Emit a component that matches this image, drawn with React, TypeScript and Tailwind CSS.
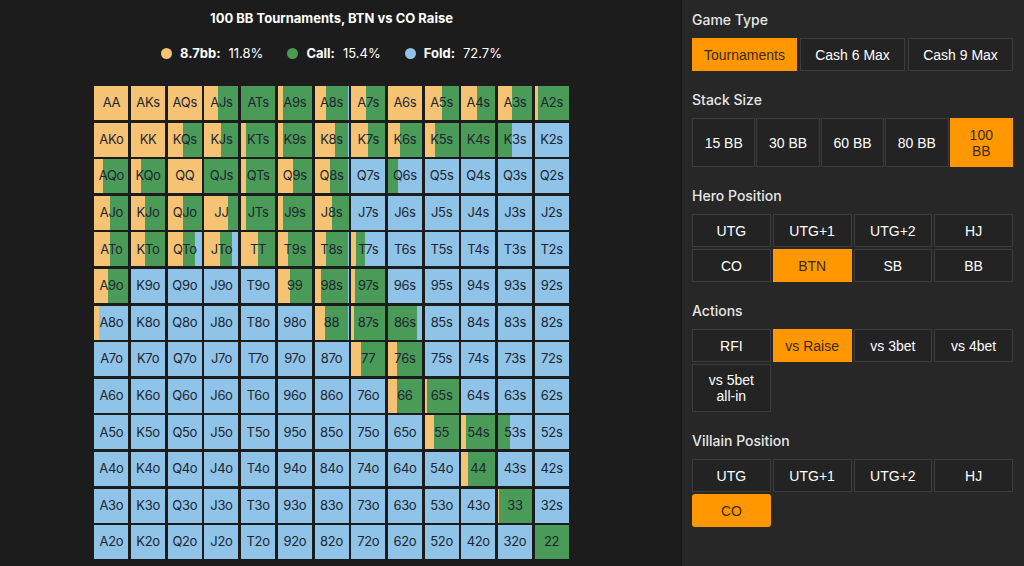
import React from "react";

const R = ["A","K","Q","J","T","9","8","7","6","5","4","3","2"];
// [raise, call] percent; fold = rest
const mix: Record<string, [number, number]> = {
  AA:[100,0],AKs:[100,0],AQs:[100,0],AJs:[40,60],ATs:[0,100],A9s:[15,85],A8s:[35,65],A7s:[45,55],A6s:[100,0],A5s:[50,50],A4s:[45,55],A3s:[40,60],A2s:[10,90],
  AKo:[100,0],KK:[100,0],KQs:[45,55],KJs:[50,50],KTs:[15,85],K9s:[15,85],K8s:[60,40],K7s:[50,50],K6s:[35,65],K5s:[30,70],K4s:[0,100],K3s:[0,40],
  AQo:[25,75],KQo:[30,70],QQ:[100,0],QJs:[0,100],QTs:[15,85],Q9s:[45,55],Q8s:[45,55],Q6s:[0,30],
  AJo:[45,55],KJo:[40,60],QJo:[45,55],JJ:[70,30],JTs:[15,85],J9s:[15,85],J8s:[50,50],
  ATo:[45,55],KTo:[40,60],QTo:[45,35],JTo:[45,35],TT:[50,50],T9s:[30,70],T8s:[35,65],T7s:[15,25],
  A9o:[40,60],"99":[35,65],"98s":[20,80],"97s":[10,90],
  A8o:[15,0],"88":[30,70],"87s":[8,92],"86s":[0,85],
  "77":[30,70],"76s":[28,72],
  "66":[28,72],"65s":[8,92],
  "55":[28,72],"54s":[15,85],"53s":[0,35],
  "44":[20,80],"33":[3,97],"22":[0,100],
};

function name(i: number, j: number) {
  if (i === j) return R[i] + R[j];
  if (j > i) return R[i] + R[j] + "s";
  return R[j] + R[i] + "o";
}

function Cell({ n }: { n: string }) {
  const [r, c] = mix[n] ?? [0, 0];
  return (
    <div className="relative h-[34px] w-[34px] overflow-hidden flex bg-[#8fc3e8]">
      <div className="h-full bg-[#f6c374]" style={{ width: r + "%" }} />
      <div className="h-full bg-[#4a9a58]" style={{ width: c + "%" }} />
      <div className="absolute inset-0 flex items-center justify-center text-[13px] text-[#1d2630] tracking-tight">{n}</div>
    </div>
  );
}

function Btn({ children, active, h = "h-[33px]", rounded }: { children: React.ReactNode; active?: boolean; h?: string; rounded?: boolean }) {
  return (
    <div
      className={
        "flex items-center justify-center text-center text-[14px] leading-[16px] border " + h + " " +
        (active ? "bg-[#ff9800] text-[#3a2a10] border-[#ff9800]" : "bg-[#232323] text-white border-[#3c3c3c]") +
        (rounded ? " rounded-[3px] border-[#d8d8d8] border-2" : "")
      }
    >
      {children}
    </div>
  );
}

function Label({ children }: { children: React.ReactNode }) {
  return <div className="text-[14px] font-medium text-[#e6e6e6] mb-[8px]" style={{ fontFamily: "Inter, sans-serif" }}>{children}</div>;
}

export default function App() {
  return (
    <div className="w-[1024px] h-[566px] flex bg-[#1c1c1c] overflow-hidden" style={{ fontFamily: "'Liberation Sans', Arial, sans-serif" }}>
      <div className="w-[685px] flex flex-col items-center pl-[0px]" style={{ fontFamily: "Inter, sans-serif" }}>
        <div className="w-[478px] ml-[-18px] flex flex-col items-center">
          <div className="mt-[9px] text-[13px] font-bold text-white">100 BB Tournaments, BTN vs CO Raise</div>
          <div className="mt-[15px] flex items-center gap-[24px] text-[13px] text-white">
            <span className="flex items-center gap-[8px]"><span className="w-[11px] h-[11px] rounded-full bg-[#f6c374]" /><b>8.7bb:</b> 11.8%</span>
            <span className="flex items-center gap-[8px]"><span className="w-[11px] h-[11px] rounded-full bg-[#4a9a58]" /><b>Call:</b> 15.4%</span>
            <span className="flex items-center gap-[8px]"><span className="w-[11px] h-[11px] rounded-full bg-[#8fc3e8]" /><b>Fold:</b> 72.7%</span>
          </div>
          <div className="mt-[23px] grid grid-cols-[repeat(13,34px)] gap-x-[2.7px] gap-y-[2.6px]">
            {R.map((_, i) => R.map((__, j) => <Cell key={i + "-" + j} n={name(i, j)} />))}
          </div>
        </div>
      </div>
      <div className="flex-1 bg-[#272727] border-l border-[#1a1a1a] pl-[10px] pr-[11px] pt-[9px]">
        <Label>Game Type</Label>
        <div className="grid grid-cols-[105px_105px_105px] gap-[3px] mb-[18px]">
          <Btn active>Tournaments</Btn><Btn>Cash 6 Max</Btn><Btn>Cash 9 Max</Btn>
        </div>
        <Label>Stack Size</Label>
        <div className="grid grid-cols-5 gap-[1px] mb-[18px]">
          <Btn h="h-[49px]">15 BB</Btn><Btn h="h-[49px]">30 BB</Btn><Btn h="h-[49px]">60 BB</Btn><Btn h="h-[49px]">80 BB</Btn><Btn h="h-[49px]" active>100<br />BB</Btn>
        </div>
        <Label>Hero Position</Label>
        <div className="grid grid-cols-4 gap-[2px] mb-[18px]">
          <Btn>UTG</Btn><Btn>UTG+1</Btn><Btn>UTG+2</Btn><Btn>HJ</Btn>
          <Btn>CO</Btn><Btn active>BTN</Btn><Btn>SB</Btn><Btn>BB</Btn>
        </div>
        <Label>Actions</Label>
        <div className="grid grid-cols-4 gap-[2px] mb-[18px]">
          <Btn>RFI</Btn><Btn active>vs Raise</Btn><Btn>vs 3bet</Btn><Btn>vs 4bet</Btn>
          <Btn h="h-[48px]">vs 5bet<br />all-in</Btn>
        </div>
        <Label>Villain Position</Label>
        <div className="grid grid-cols-4 gap-[2px]">
          <Btn>UTG</Btn><Btn>UTG+1</Btn><Btn>UTG+2</Btn><Btn>HJ</Btn>
          <Btn active rounded>CO</Btn>
        </div>
      </div>
    </div>
  );
}
